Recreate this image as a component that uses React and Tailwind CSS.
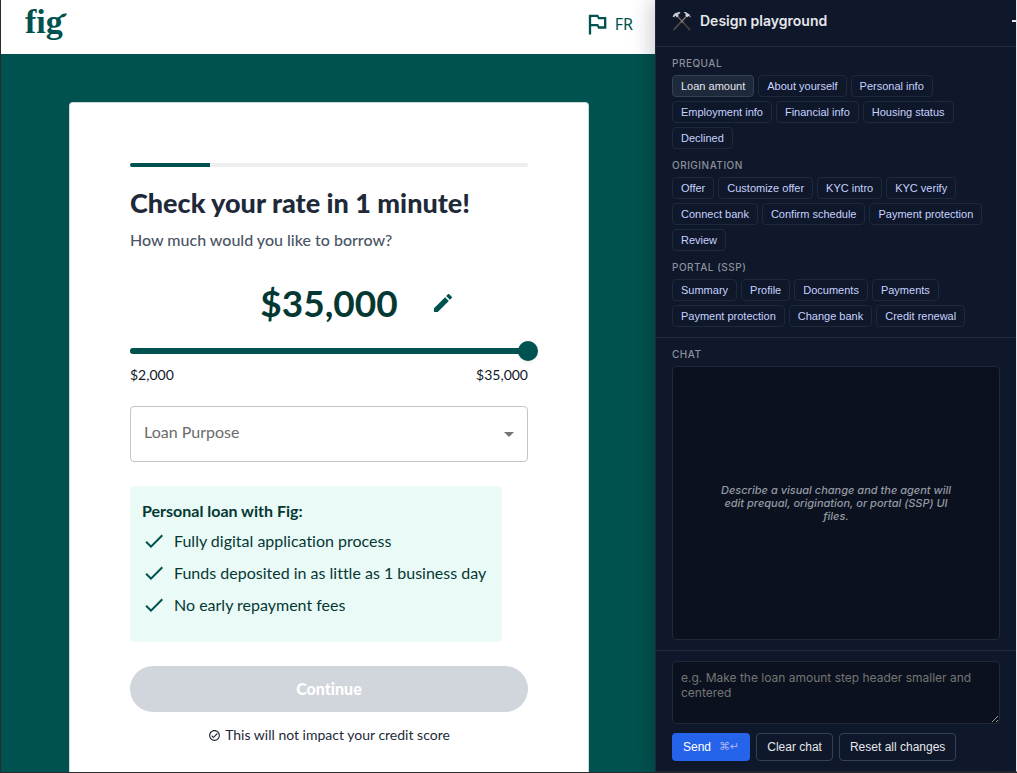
import React, { useState } from "react";
import { MdArrowDropDown, MdCheck, MdEdit, MdOutlineCheckCircle, MdOutlinedFlag } from "react-icons/md";

const MIN_AMOUNT = 2000;
const MAX_AMOUNT = 35000;

const stepGroups = [
  {
    title: "Prequal",
    steps: [
      "Loan amount",
      "About yourself",
      "Personal info",
      "Employment info",
      "Financial info",
      "Housing status",
      "Declined",
    ],
  },
  {
    title: "Origination",
    steps: [
      "Offer",
      "Customize offer",
      "KYC intro",
      "KYC verify",
      "Connect bank",
      "Confirm schedule",
      "Payment protection",
      "Review",
    ],
  },
  {
    title: "Portal (SSP)",
    steps: [
      "Summary",
      "Profile",
      "Documents",
      "Payments",
      "Payment protection",
      "Change bank",
      "Credit renewal",
    ],
  },
];

const benefits = [
  "Fully digital application process",
  "Funds deposited in as little as 1 business day",
  "No early repayment fees",
];

const formatAmount = (value) => `$${value.toLocaleString("en-US")}`;

const Logo = () => (
  <a href="#" aria-label="fig" className="relative flex text-[#005250]">
    <span className="font-['Liberation_Serif',serif] text-[34px] leading-9 font-bold">fig</span>
    <svg className="absolute top-2 -right-1 h-2 w-2" viewBox="0 0 8 8" fill="currentColor">
      <path d="M0.5 5.5C1.5 2.2 4 1.2 8 1.6C7.2 4.6 4.5 6 0.5 5.5Z" />
    </svg>
  </a>
);

const HammersIcon = () => (
  <svg className="h-5 w-5" viewBox="0 0 20 20" fill="none" aria-hidden="true">
    <path d="M5 4.5L17.5 18.5" stroke="#4a403c" strokeWidth="1.8" strokeLinecap="round" />
    <path d="M15 4.5L2 18.5" stroke="#5a4a44" strokeWidth="1.8" strokeLinecap="round" />
    <path d="M6 6L11.5 12" stroke="#8b8581" strokeWidth="0.8" />
    <path d="M14 6L9 11.5" stroke="#a09a96" strokeWidth="0.8" />
    <path d="M0.5 5.5L2.5 2.5L7.5 0.8L8.5 2L6.2 3.6L6.5 5.2L4.8 6.4L3.6 4.8L2 6.2Z" fill="#c9cbd0" />
    <path d="M11.5 1.2L13.5 1L17.5 3.4L19.2 6.4L16.8 5L15 6.2L13.4 4.8L13.8 3Z" fill="#d5d6da" />
    <path d="M17.2 3.4L19.2 6.4L17.4 5.4Z" fill="#a8605e" />
  </svg>
);

const LoanCard = () => {
  const [amount, setAmount] = useState(MAX_AMOUNT);
  const progress = ((amount - MIN_AMOUNT) / (MAX_AMOUNT - MIN_AMOUNT)) * 100;

  return (
    <section className="w-full max-w-[520px] rounded-t border border-b-0 border-gray-300 bg-white px-[60px] pt-[60px]">
      <div className="h-1 overflow-hidden rounded-full bg-[#eeeeee]">
        <div className="h-full w-1/5 bg-[#005250]" />
      </div>

      <h1 className="mt-[18px] text-[27px] leading-9 font-black text-gray-800">
        Check your rate in 1 minute!
      </h1>
      <p className="mt-[5px] text-base leading-7 font-medium text-gray-600">
        How much would you like to borrow?
      </p>

      <div className="mt-[25px] flex items-center justify-center pl-[58px]">
        <span className="text-[37px] leading-12 font-bold text-[#053833]">{formatAmount(amount)}</span>
        <button type="button" aria-label="Edit amount" className="ml-8 p-px text-[#005250]">
          <MdEdit className="h-6 w-6" />
        </button>
      </div>

      <div className="relative mt-3.5 h-5">
        <div className="absolute inset-x-0 top-[7px] h-1.5 rounded-full bg-[#b3cbcb]">
          <div className="h-full rounded-full bg-[#005250]" style={{ width: `${progress}%` }} />
        </div>
        <input
          type="range"
          aria-label="Loan amount"
          min={MIN_AMOUNT}
          max={MAX_AMOUNT}
          step={500}
          value={amount}
          onChange={(e) => setAmount(Number(e.target.value))}
          className="absolute -inset-x-[10px] top-0 h-5 appearance-none bg-transparent [&::-webkit-slider-thumb]:h-5 [&::-webkit-slider-thumb]:w-5 [&::-webkit-slider-thumb]:appearance-none [&::-webkit-slider-thumb]:rounded-full [&::-webkit-slider-thumb]:bg-[#005250] [&::-webkit-slider-thumb]:shadow"
        />
      </div>
      <div className="mt-0.5 flex justify-between text-sm leading-6 text-gray-900">
        <span>{formatAmount(MIN_AMOUNT)}</span>
        <span>{formatAmount(MAX_AMOUNT)}</span>
      </div>

      <div className="relative mt-[19px]">
        <select
          aria-label="Loan Purpose"
          defaultValue=""
          className="h-14 w-full appearance-none rounded border border-[#c4c4c4] bg-white px-[13px] pb-1 text-base text-[#6b6b6b]"
        >
          <option value="">Loan Purpose</option>
        </select>
        <MdArrowDropDown className="pointer-events-none absolute top-4 right-[7px] h-6 w-6 text-[#757575]" />
      </div>

      <div className="mt-6 w-fit rounded bg-[#eafaf7] pt-[13px] pr-4 pb-[21px] pl-3 text-[#053833]">
        <h2 className="text-base leading-6 font-bold">Personal loan with Fig:</h2>
        <ul className="mt-0.5">
          {benefits.map((benefit) => (
            <li key={benefit} className="flex h-8 items-center">
              <MdCheck className="h-6 w-6 text-[#005250]" />
              <span className="ml-2 text-base">{benefit}</span>
            </li>
          ))}
        </ul>
      </div>

      <button
        type="button"
        className="mt-6 h-[46px] w-full rounded-full bg-[#d1d5dc] text-base font-black text-white"
      >
        Continue
      </button>
      <p className="mt-[11px] flex items-center justify-center gap-1 text-sm leading-6 text-gray-800">
        <MdOutlineCheckCircle className="h-[13px] w-[13px]" />
        This will not impact your credit score
      </p>
    </section>
  );
};

const PanelLabel = ({ children }) => (
  <h3 className="mt-2 mb-1 text-[10px] leading-4 font-medium tracking-wider text-[#8b909b] uppercase">
    {children}
  </h3>
);

const Playground = () => {
  const [activeStep, setActiveStep] = useState("Prequal/Loan amount");
  const [message, setMessage] = useState("");

  return (
    <aside className="relative flex w-[362px] shrink-0 flex-col overflow-hidden border border-t-0 border-[#1e293b] border-r-gray-200 bg-[#0f172a] font-['Inter',sans-serif] shadow-[-4px_0_20px_rgba(0,0,0,0.2)]">
      <header className="flex h-[47px] shrink-0 items-center border-b border-[#1e293b] pb-1 pl-4">
        <HammersIcon />
        <h2 className="ml-2 flex-1 text-sm font-semibold text-gray-200">Design playground</h2>
        <button type="button" aria-label="Collapse" className="-mr-1 h-6 w-2">
          <span className="block h-0.5 bg-gray-200" />
        </button>
      </header>

      <nav className="border-b border-[#1e293b] px-4 pb-2.5">
        {stepGroups.map((group) => (
          <div key={group.title}>
            <PanelLabel>{group.title}</PanelLabel>
            <div className="flex flex-wrap gap-1">
              {group.steps.map((step) => {
                const id = `${group.title}/${step}`;
                return (
                  <button
                    key={id}
                    type="button"
                    onClick={() => setActiveStep(id)}
                    className={`h-[22px] rounded border px-2 font-['Liberation_Sans',Arial,sans-serif] text-[11px] ${
                      activeStep === id
                        ? "border-[#334155] bg-[#1e293b] text-gray-200"
                        : "border-[#1e293b] text-[#c7d2fe]"
                    }`}
                  >
                    {step}
                  </button>
                );
              })}
            </div>
          </div>
        ))}
      </nav>

      <div className="flex flex-1 flex-col border-b border-[#1e293b] px-4 pb-2.5">
        <PanelLabel>Chat</PanelLabel>
        <div className="flex flex-1 items-center justify-center rounded border border-[#1e293b] bg-[#0b111e] px-10">
          <p className="text-center text-[11px] leading-[13px] font-medium text-[#9499a3] italic">
            Describe a visual change and the agent will edit prequal, origination, or portal (SSP) UI files.
          </p>
        </div>
      </div>

      <div className="px-4 pt-2.5 pb-2.5">
        <textarea
          aria-label="Message"
          value={message}
          onChange={(e) => setMessage(e.target.value)}
          placeholder="e.g. Make the loan amount step header smaller and centered"
          className="block h-[63px] w-full rounded border border-[#1e293b] bg-[#0b111e] p-2 text-xs leading-[15px] text-gray-200 placeholder:text-[#757575]"
        />
        <div className="mt-[9px] flex gap-1.5 font-['Liberation_Sans',Arial,sans-serif] text-xs text-gray-200">
          <button type="button" className="flex h-7 items-center rounded bg-[#2563eb] px-[11px] text-white">
            Send
            <span className="ml-2 font-['DejaVu_Sans',sans-serif] text-[11px] text-[#a8b4f7]">⌘↵</span>
          </button>
          <button type="button" className="h-7 rounded border border-[#334155] px-2.5">
            Clear chat
          </button>
          <button type="button" className="h-7 rounded border border-[#334155] px-2.5">
            Reset all changes
          </button>
        </div>
      </div>
    </aside>
  );
};

const App = () => {
  return (
    <div className="flex min-h-screen border-b border-l border-[#2b2b2b] bg-[#005250] font-['Lato',sans-serif] [font-variant-ligatures:none]">
      <div className="flex min-w-0 flex-1 flex-col">
        <header className="flex h-[54px] shrink-0 items-start justify-between bg-white pt-1 pr-[22px] pl-6">
          <Logo />
          <button
            type="button"
            className="mt-1 flex h-8 items-center gap-1 font-['Noto_Sans',sans-serif] text-base text-[#005250]"
          >
            <MdOutlinedFlag className="h-7 w-7" />
            FR
          </button>
        </header>
        <main className="flex flex-1 justify-center pt-12 pr-4 pl-[18px]">
          <LoanCard />
        </main>
      </div>
      <Playground />
    </div>
  );
};

export default App;
